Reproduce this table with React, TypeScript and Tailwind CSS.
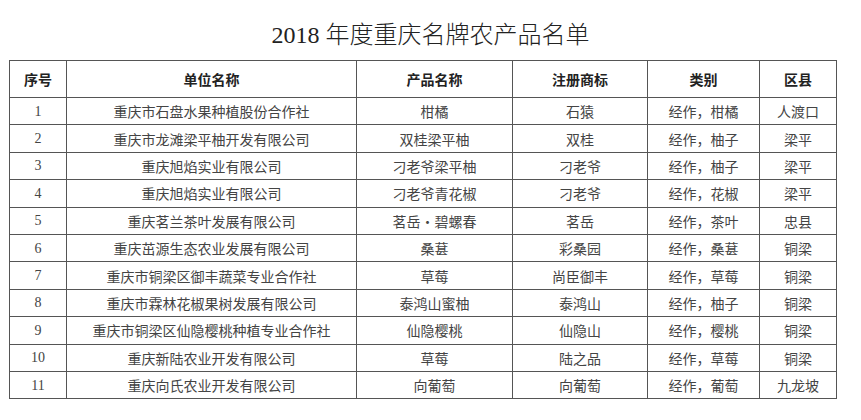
const rows: [string, string, string, string, string, string][] = [
  ["1", "重庆市石盘水果种植股份合作社", "柑橘", "石猿", "经作，柑橘", "人渡口"],
  ["2", "重庆市龙滩梁平柚开发有限公司", "双桂梁平柚", "双桂", "经作，柚子", "梁平"],
  ["3", "重庆旭焰实业有限公司", "刁老爷梁平柚", "刁老爷", "经作，柚子", "梁平"],
  ["4", "重庆旭焰实业有限公司", "刁老爷青花椒", "刁老爷", "经作，花椒", "梁平"],
  ["5", "重庆茗兰茶叶发展有限公司", "茗岳·碧螺春", "茗岳", "经作，茶叶", "忠县"],
  ["6", "重庆茁源生态农业发展有限公司", "桑葚", "彩桑园", "经作，桑葚", "铜梁"],
  ["7", "重庆市铜梁区御丰蔬菜专业合作社", "草莓", "尚臣御丰", "经作，草莓", "铜梁"],
  ["8", "重庆市霖林花椒果树发展有限公司", "泰鸿山蜜柚", "泰鸿山", "经作，柚子", "铜梁"],
  ["9", "重庆市铜梁区仙隐樱桃种植专业合作社", "仙隐樱桃", "仙隐山", "经作，樱桃", "铜梁"],
  ["10", "重庆新陆农业开发有限公司", "草莓", "陆之品", "经作，草莓", "铜梁"],
  ["11", "重庆向氏农业开发有限公司", "向葡萄", "向葡萄", "经作，葡萄", "九龙坡"],
];

const headers = ["序号", "单位名称", "产品名称", "注册商标", "类别", "区县"];
const widths = ["w-[57px]", "w-[290px]", "w-[156px]", "w-[135px]", "w-[112px]", "w-[77px]"];

export default function App() {
  return (
    <div className="h-[420px] w-[861px] overflow-hidden bg-white text-[#444] [font-family:'Noto_Sans_CJK_SC',sans-serif]">
      <h1 className="pt-[19px] text-center text-[24px] leading-[32px] font-light text-[#222] [font-family:'Liberation_Serif','Noto_Sans_CJK_SC',serif]">
        2018 年度重庆名牌农产品名单
      </h1>
      <table className="mt-[9px] ml-[9px] w-[827px] table-fixed border-collapse border border-[#555] text-[14px]">
        <thead>
          <tr className="h-[37px]">
            {headers.map((h, i) => (
              <th key={h} className={`${widths[i]} border border-[#555] text-center font-bold text-[#222]`}>
                {h}
              </th>
            ))}
          </tr>
        </thead>
        <tbody>
          {rows.map((r) => (
            <tr key={r[0]} className="h-[27.4px]">
              <td className="border border-[#555] text-center [font-family:'Liberation_Serif',serif]">{r[0]}</td>
              {r.slice(1).map((c, i) => (
                <td key={i} className="border border-[#555] text-center leading-none">
                  {c}
                </td>
              ))}
            </tr>
          ))}
        </tbody>
      </table>
    </div>
  );
}
